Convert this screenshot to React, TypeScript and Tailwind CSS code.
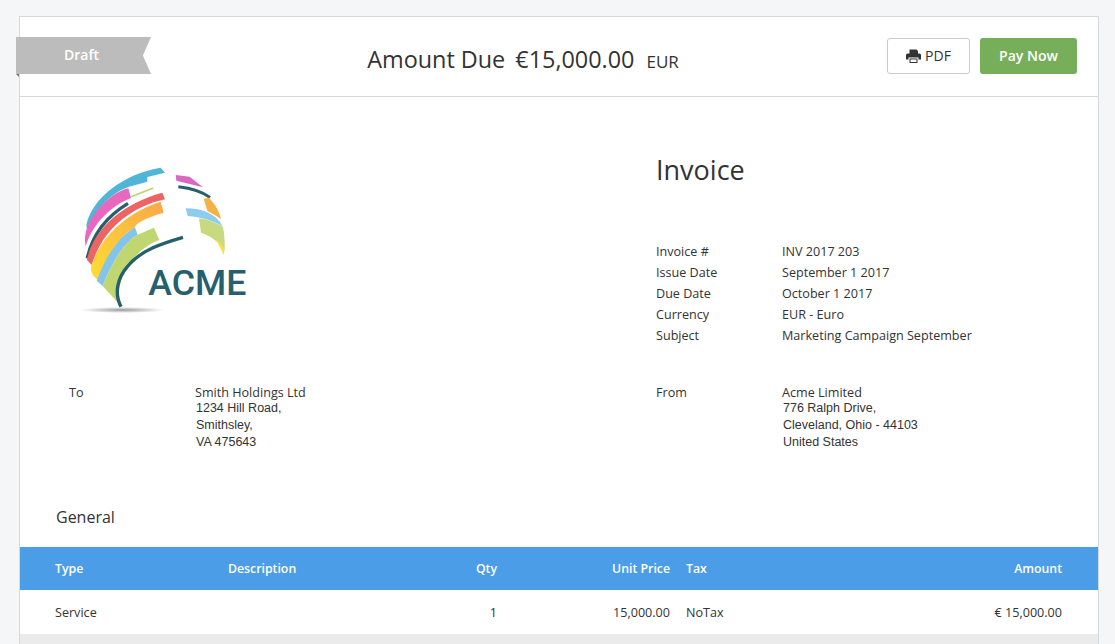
const details = [
  ["Invoice #", "INV 2017 203"],
  ["Issue Date", "September 1 2017"],
  ["Due Date", "October 1 2017"],
  ["Currency", "EUR - Euro"],
  ["Subject", "Marketing Campaign September"],
];

function PrintIcon() {
  return (
    <svg width="15" height="14" viewBox="0 0 15 14" className="block">
      <path d="M3.5 0.5H10.5L12 2V5.5H3.5Z" fill="#333" />
      <path d="M1.5 4.5H13.5A1.5 1.5 0 0 1 15 6V10.5H12.5V8.5H2.5V10.5H0V6A1.5 1.5 0 0 1 1.5 4.5Z" fill="#333" />
      <path d="M3.5 9.5H11.5V14H3.5Z" fill="#333" />
      <path d="M4.5 10.5H10.5V13H4.5Z" fill="#fff" />
    </svg>
  );
}

function Logo() {
  return (
    <svg width="210" height="180" viewBox="0 0 630 540" className="block">
      <defs>
        <linearGradient id="sunset" x1="0" y1="1" x2="1" y2="0">
          <stop offset="0" stopColor="#ffdd33" />
          <stop offset="1" stopColor="#f7a84a" />
        </linearGradient>
        <radialGradient id="shadow">
          <stop offset="0" stopColor="#9a9a9a" />
          <stop offset="1" stopColor="#ffffff" />
        </radialGradient>
      </defs>
      <ellipse cx="190" cy="480" rx="125" ry="9" fill="url(#shadow)" />
      <path d="M82 225C100 140 200 70 305 53L318 68L265 81V95L210 110C150 130 100 190 85 245Z" fill="#4fb6d8" />
      <path d="M84 235C100 190 150 130 208 115L216 144C160 165 100 220 80 290C76 270 78 250 84 235Z" fill="#e868be" />
      <path d="M85 325C100 250 150 195 207 160" fill="none" stroke="#25606c" strokeWidth="10" />
      <path d="M216 140L283 114" fill="none" stroke="#b9d46d" strokeWidth="5" />
      <path d="M84 330C100 240 190 160 310 128L318 148C215 170 130 240 98 345Z" fill="#ec6464" />
      <path d="M96 350C125 255 210 185 305 155L314 188C255 205 228 222 228 232C190 255 150 295 118 390C102 380 94 365 96 350Z" fill="url(#sunset)" />
      <path d="M113 392C150 295 190 255 228 232L236 254C205 270 165 320 131 408Z" fill="#84c3ea" />
      <path d="M131 408C165 320 205 270 236 254L285 233L301 270C265 282 215 320 190 380C180 410 176 440 183 465Z" fill="#bfd671" />
      <path d="M186 470C165 430 175 385 205 350C245 300 310 280 372 262" fill="none" stroke="#25606c" strokeWidth="10" />
      <path d="M350 75L392 80L432 112L352 92Z" fill="#d968c0" />
      <path d="M358 110C400 115 430 125 453 142" fill="none" stroke="#25606c" strokeWidth="9" />
      <path d="M434 146L450 143C470 165 482 185 486 208C470 195 455 188 445 183Z" fill="#f5b244" />
      <path d="M380 175C430 175 470 190 492 230C460 210 420 200 386 198Z" fill="#8ccdef" />
      <path d="M420 205C450 208 475 220 492 232C497 255 498 280 497 302C480 275 455 258 426 248Z" fill="#c8da7f" />
      <path d="M470 268C480 275 490 285 496 300L495 316Z" fill="#f8e04c" />
      <text x="268" y="435" fontFamily="Roboto, sans-serif" fontWeight="500" fontSize="104" fill="#25606c" textLength="294" lengthAdjust="spacingAndGlyphs">
        ACME
      </text>
    </svg>
  );
}

function Address({ lines }: { lines: string[] }) {
  return (
    <div className="-mt-[1px] pl-px font-['Liberation_Sans',sans-serif] text-[12.5px] leading-[17px]">
      {lines.map((line) => (
        <div key={line}>{line}</div>
      ))}
    </div>
  );
}

export default function App() {
  return (
    <div className="h-screen overflow-hidden bg-[#f5f6f8] pl-[19px] pr-[16px] pt-[16px] font-['Open_Sans',sans-serif] text-[12.6px] text-[#333]">
      <div className="relative h-[700px] border border-[#d6d8db] bg-white">
        <div className="absolute left-[-4px] top-[57px] h-[3px] w-[3px] bg-[#777] [clip-path:polygon(0_0,100%_0,100%_100%)]" />
        <div className="absolute left-[-4px] top-[20px] flex h-[37px] w-[135px] items-center bg-[#bcbcbc] pb-[2px] pl-[48px] text-[14px] font-semibold text-white [clip-path:polygon(0_0,100%_0,94%_50%,100%_100%,0_100%)]">
          Draft
        </div>
        <div className="flex h-[80px] items-center border-b border-[#d6d8db] pr-[20px]">
          <div className="flex flex-1 items-baseline justify-center pl-[139px] pt-[6px]">
            <span className="text-[23.4px]">Amount Due</span>
            <span className="ml-[10px] text-[23.4px]">€15,000.00</span>
            <span className="ml-[12px] text-[17px]">EUR</span>
          </div>
          <div className="mb-[2px] mr-px flex gap-[10px]">
            <button className="flex h-[36px] w-[83px] items-center justify-center gap-[4px] rounded-[3px] border border-[#ccc] bg-white text-[14px]">
              <PrintIcon />
              PDF
            </button>
            <button className="h-[36px] w-[97px] rounded-[3px] bg-[#76ae5a] text-[14px] font-semibold text-white">
              Pay Now
            </button>
          </div>
        </div>

        <div className="flex">
          <div className="w-[636px] pl-[39px] pt-[53px]">
            <Logo />
          </div>
          <div className="pt-[55px]">
            <h1 className="text-[27px] leading-[36px]">Invoice</h1>
            <div className="mt-[53px] grid grid-cols-[126px_auto] leading-[21px]">
              {details.map(([label, value]) => (
                <div key={label} className="contents">
                  <span>{label}</span>
                  <span>{value}</span>
                </div>
              ))}
            </div>
          </div>
        </div>

        <div className="mt-[38px] flex">
          <div className="grid w-[636px] grid-cols-[126px_auto] pl-[49px]">
            <span className="leading-[17px]">To</span>
            <div>
              <div className="leading-[17px]">Smith Holdings Ltd</div>
              <Address lines={["1234 Hill Road,", "Smithsley,", "VA 475643"]} />
            </div>
          </div>
          <div className="grid grid-cols-[126px_auto]">
            <span className="leading-[17px]">From</span>
            <div>
              <div className="leading-[17px]">Acme Limited</div>
              <Address lines={["776 Ralph Drive,", "Cleveland, Ohio - 44103", "United States"]} />
            </div>
          </div>
        </div>

        <h2 className="mt-[55px] pl-[36px] text-[16px] leading-[22px]">General</h2>

        <div className="mt-[19px] grid h-[43px] grid-cols-[173px_200px_69px_173px_16px_auto_1fr] items-center bg-[#4b9de8] pl-[35px] pr-[36px] pt-[1px] text-[12.3px] font-semibold text-white">
          <span>Type</span>
          <span>Description</span>
          <span className="text-right">Qty</span>
          <span className="text-right">Unit Price</span>
          <span />
          <span>Tax</span>
          <span className="text-right">Amount</span>
        </div>
        <div className="grid h-[44px] grid-cols-[173px_200px_69px_173px_16px_auto_1fr] items-center pl-[35px] pr-[36px] pt-[2px]">
          <span>Service</span>
          <span />
          <span className="text-right">1</span>
          <span className="text-right">15,000.00</span>
          <span />
          <span>NoTax</span>
          <span className="text-right">€ 15,000.00</span>
        </div>
        <div className="h-[60px] bg-[#ebebeb]" />
      </div>
    </div>
  );
}
